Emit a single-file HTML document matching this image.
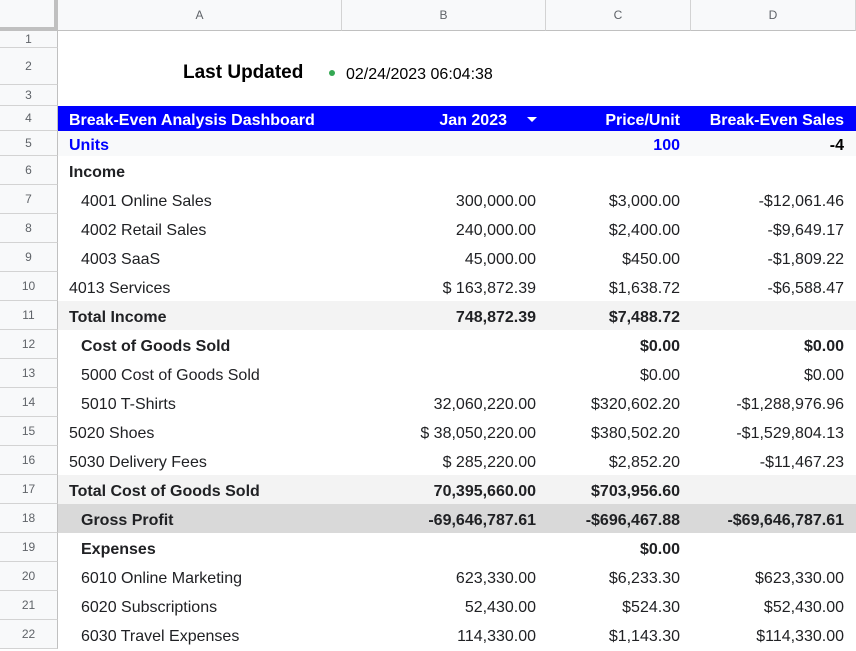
<!DOCTYPE html><html><head><style>
body{margin:0;width:856px;height:651px;overflow:hidden;background:#fff;font-family:"Liberation Sans",sans-serif;position:relative}
.a{position:absolute;box-sizing:border-box}
.rh{left:0;width:58px;background:#f8f9fa;border-right:1px solid #c0c0c0;border-bottom:1px solid #d3d3d3;color:#5f6368;font-size:12px;text-align:center}
.ch{top:0;height:31px;background:#f8f9fa;border-right:1px solid #d3d3d3;border-bottom:1px solid #c0c0c0;color:#5f6368;font-size:12px;text-align:center;line-height:31px}
.row{left:58px;width:798px;font-size:16px;color:#202124}
.c{position:absolute;top:2px;white-space:nowrap}
.b{font-weight:bold}
</style></head><body>
<div class="a" style="left:0;top:0;width:58px;height:31px;background:#f8f9fa;border-right:4px solid #c0c0c0;border-bottom:4px solid #c0c0c0"></div>
<div class="a ch" style="left:58px;width:284px">A</div>
<div class="a ch" style="left:342px;width:204px">B</div>
<div class="a ch" style="left:546px;width:145px">C</div>
<div class="a ch" style="left:691px;width:165px">D</div>
<div id="rows"></div>
<script>
var tops=[31,48,85,106,131,156];for(var i=7;i<=23;i++)tops.push(156+(i-6)*29);
var data={
2:[],
4:{bg:'#0000ff',col:'#fff',b:1,a:'Break-Even Analysis Dashboard',bb:'Jan 2023',c:'Price/Unit',d:'Break-Even Sales'},
5:{bg:'#f8f9fa',col:'#0000ff',b:1,a:'Units',c:'100',d:'-4',dc:'#000'},
6:{b:1,a:'Income'},
7:{a:'4001 Online Sales',i:1,bb:'300,000.00',c:'$3,000.00',d:'-$12,061.46'},
8:{a:'4002 Retail Sales',i:1,bb:'240,000.00',c:'$2,400.00',d:'-$9,649.17'},
9:{a:'4003 SaaS',i:1,bb:'45,000.00',c:'$450.00',d:'-$1,809.22'},
10:{a:'4013 Services',bb:'$ 163,872.39',c:'$1,638.72',d:'-$6,588.47'},
11:{bg:'#f3f3f3',b:1,a:'Total Income',bb:'748,872.39',c:'$7,488.72'},
12:{b:1,i:1,a:'Cost of Goods Sold',c:'$0.00',d:'$0.00'},
13:{i:1,a:'5000 Cost of Goods Sold',c:'$0.00',d:'$0.00'},
14:{i:1,a:'5010 T-Shirts',bb:'32,060,220.00',c:'$320,602.20',d:'-$1,288,976.96'},
15:{a:'5020 Shoes',bb:'$ 38,050,220.00',c:'$380,502.20',d:'-$1,529,804.13'},
16:{a:'5030 Delivery Fees',bb:'$ 285,220.00',c:'$2,852.20',d:'-$11,467.23'},
17:{bg:'#f3f3f3',b:1,a:'Total Cost of Goods Sold',bb:'70,395,660.00',c:'$703,956.60'},
18:{bg:'#d9d9d9',b:1,i:1,a:'Gross Profit',bb:'-69,646,787.61',c:'-$696,467.88',d:'-$69,646,787.61'},
19:{b:1,i:1,a:'Expenses',c:'$0.00'},
20:{i:1,a:'6010 Online Marketing',bb:'623,330.00',c:'$6,233.30',d:'$623,330.00'},
21:{i:1,a:'6020 Subscriptions',bb:'52,430.00',c:'$524.30',d:'$52,430.00'},
22:{i:1,a:'6030 Travel Expenses',bb:'114,330.00',c:'$1,143.30',d:'$114,330.00'}};
var h='';
for(var r=1;r<=22;r++){var t=tops[r-1],ht=tops[r]-t;
h+='<div class="a rh" style="top:'+t+'px;height:'+ht+'px;line-height:'+ht+'px">'+r+'</div>';
var d=data[r];if(!d||d.length===0)continue;
var st='top:'+t+'px;height:'+ht+'px;line-height:'+ht+'px;'+(d.bg?'background:'+d.bg+';':'')+(d.col?'color:'+d.col+';':'')+(d.b?'font-weight:bold;':'');
h+='<div class="a row" style="'+st+'">';
if(d.a)h+='<span class="c" style="left:'+(d.i?23:11)+'px">'+d.a+'</span>';
if(d.bb)h+='<span class="c" style="right:'+(r==4?349:320)+'px">'+d.bb+'</span>';
if(d.c)h+='<span class="c" style="right:'+(798-622)+'px">'+d.c+'</span>';
if(d.d)h+='<span class="c" style="right:12px;'+(d.dc?'color:'+d.dc:'')+'">'+d.d+'</span>';
if(r==4)h+='<span class="c" style="left:469px;top:11px;width:0;height:0;border-left:5px solid transparent;border-right:5px solid transparent;border-top:5px solid #fff;line-height:0"></span>';
h+='</div>';}
h+='<div class="a" style="left:183px;top:62px;font-size:19px;font-weight:bold;color:#000">Last Updated</div>';
h+='<div class="a" style="left:329px;top:70px;width:6px;height:6px;border-radius:50%;background:#34a853"></div>';
h+='<div class="a" style="left:346px;top:66px;font-size:16px;color:#000">02/24/2023 06:04:38</div>';
document.getElementById('rows').innerHTML=h;
</script>
</body></html>
